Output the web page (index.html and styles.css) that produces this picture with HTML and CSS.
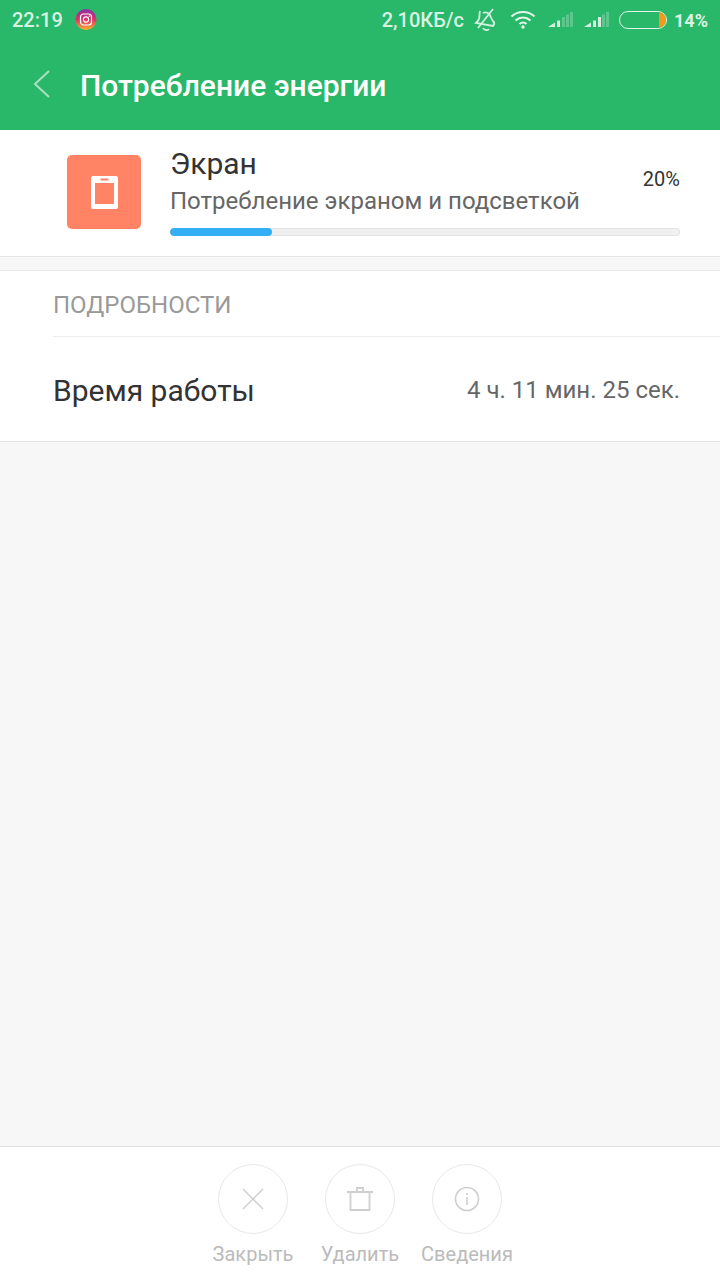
FILE: index.html
```html
<!DOCTYPE html>
<html lang="ru">
<head>
    <meta charset="UTF-8">
    <meta name="viewport" content="width=device-width, initial-scale=1.0">
    <title>Потребление энергии</title>
    <link rel="stylesheet" href="styles.css">
</head>
<body>
    <div class="page">
        <header class="top">
            <div class="status">
                <span class="time">22:19</span>
                <svg class="insta" width="22" height="22" viewBox="0 0 22 22">
                    <defs>
                        <linearGradient id="ig" x1="0" y1="0" x2="0" y2="1">
                            <stop offset="0" stop-color="#8a2fa8"/>
                            <stop offset="0.5" stop-color="#e0306a"/>
                            <stop offset="1" stop-color="#f7b52c"/>
                        </linearGradient>
                    </defs>
                    <circle cx="11" cy="10.5" r="10.5" fill="url(#ig)"/>
                    <rect x="5.5" y="5" width="11" height="11" rx="3" fill="none" stroke="#fff" stroke-width="1.2"/>
                    <circle cx="11" cy="10.5" r="2.6" fill="none" stroke="#fff" stroke-width="1.1"/>
                    <circle cx="14.3" cy="7.2" r="0.7" fill="#fff"/>
                </svg>
                <span class="status-right">
                    <span class="speed">2,10КБ/с</span>
                    <svg class="bell" width="24" height="24" viewBox="0 0 24 24" fill="none" stroke="#d4f0de" stroke-width="1.8">
                        <path d="M6 3c-1 3 0 5-1 8-1 2-2 3-3 4l17 3c1-1 2-3 0-5-2-2-2-5-4-7-2-2-4-2-6-1"/>
                        <path d="M9 20c1 2.500 5 2.500 6 1"/>
                        <path d="M19 1L4 20"/>
                    </svg>
                    <svg class="wifi" width="26" height="20" viewBox="0 0 26 20" fill="none" stroke="#e4f6ea" stroke-width="2.200">
                        <path d="M1.500 6.500c6.500-6 16.500-6 23 0"/>
                        <path d="M5.500 10.500c4.500-4 10.500-4 15 0"/>
                        <path d="M9.500 14c2-1.800 5-1.800 7 0"/>
                        <circle cx="13" cy="17" r="1.700" fill="#e4f6ea" stroke="none"/>
                    </svg>
                    <svg class="signal" width="25" height="18" viewBox="0 0 25 18">
                        <path d="M0 16l7-4.500V16z" fill="#d4f0de"/>
                        <rect x="9" y="9.500" width="3" height="6.500" fill="#d4f0de"/>
                        <rect x="14" y="6" width="3" height="10" fill="#d4f0de" opacity="0.3"/>
                        <rect x="18" y="3.500" width="3" height="12.500" fill="#d4f0de" opacity="0.3"/>
                        <rect x="22" y="1" width="3" height="15" fill="#d4f0de" opacity="0.3"/>
                    </svg>
                    <svg class="signal" width="25" height="18" viewBox="0 0 25 18">
                        <path d="M0 16l7-4.500V16z" fill="#d4f0de"/>
                        <rect x="9" y="9.500" width="3" height="6.500" fill="#d4f0de"/>
                        <rect x="14" y="6" width="3" height="10" fill="#d4f0de"/>
                        <rect x="18" y="3.500" width="3" height="12.500" fill="#d4f0de" opacity="0.3"/>
                        <rect x="22" y="1" width="3" height="15" fill="#d4f0de" opacity="0.3"/>
                    </svg>
                    <span class="battery"><span class="battery-level"></span></span>
                    <span class="percent">14%</span>
                </span>
            </div>
            <div class="titlebar">
                <svg class="back" width="18" height="28" viewBox="0 0 18 28" fill="none" stroke="#a9e0be" stroke-width="2">
                    <path d="M16 1L2 14l14 13"/>
                </svg>
                <h1>Потребление энергии</h1>
            </div>
        </header>

        <section class="usage">
            <div class="usage-icon">
                <svg width="27" height="33" viewBox="0 0 27 33">
                    <path fill-rule="evenodd" fill="#fff" d="M2 0h23a2 2 0 0 1 2 2v29a2 2 0 0 1-2 2H2a2 2 0 0 1-2-2V2a2 2 0 0 1 2-2zM4 7v21h19V7zM9.500 2.500v2h8v-2z"/>
                </svg>
            </div>
            <div class="usage-body">
                <div class="usage-name">Экран</div>
                <div class="usage-row">
                    <span class="usage-desc">Потребление экраном и подсветкой</span>
                    <span class="usage-percent">20%</span>
                </div>
                <div class="bar"><div class="bar-fill" style="width: 20%"></div></div>
            </div>
        </section>

        <section class="details">
            <div class="details-head"><span>ПОДРОБНОСТИ</span></div>
            <div class="details-row">
                <span class="details-label">Время работы</span>
                <span class="details-value">4 ч. 11 мин. 25 сек.</span>
            </div>
        </section>

        <div class="spacer"></div>

        <footer class="actions">
            <div class="action">
                <span class="circle">
                    <svg width="24" height="24" viewBox="0 0 24 24" fill="none" stroke="#cdcdcd" stroke-width="1.400">
                        <path d="M2 2l20 20M22 2L2 22"/>
                    </svg>
                </span>
                <span class="action-label">Закрыть</span>
            </div>
            <div class="action">
                <span class="circle">
                    <svg width="26" height="26" viewBox="0 0 26 26" fill="none" stroke="#cfcfcf" stroke-width="1.800">
                        <path d="M0 6h26M3.500 6v18h19V6M10 6V2h6v4"/>
                    </svg>
                </span>
                <span class="action-label">Удалить</span>
            </div>
            <div class="action">
                <span class="circle">
                    <svg width="26" height="26" viewBox="0 0 26 26" fill="none" stroke="#cfcfcf" stroke-width="1.600">
                        <circle cx="13" cy="13" r="11.500"/>
                        <path d="M13 11v8M13 7v2"/>
                    </svg>
                </span>
                <span class="action-label">Сведения</span>
            </div>
        </footer>
    </div>
</body>
</html>
```

FILE: styles.css
```css
* {
    box-sizing: border-box;
}
body {
    margin: 0;
    font-family: Roboto, "Noto Sans", sans-serif;
    background-color: #f7f7f7;
}
.page {
    width: 720px;
    height: 1280px;
    display: flex;
    flex-direction: column;
    overflow: hidden;
}
.top {
    height: 130px;
    background-color: #29b76a;
}
.status {
    height: 40px;
    display: flex;
    align-items: center;
    padding: 0 12px;
    color: #d9f3e2;
    font-size: 20px;
    font-weight: 500;
}
.insta {
    margin-left: 12px;
}
.status-right {
    margin-left: auto;
    display: flex;
    align-items: center;
}
.bell {
    margin-left: 10px;
}
.wifi {
    margin-left: 12px;
}
.signal {
    margin-left: 12px;
}
.signal + .signal {
    margin-left: 11px;
}
.battery {
    width: 48px;
    height: 18px;
    margin-left: 10px;
    border: 1.5px solid #e4f6ea;
    border-radius: 9px;
    display: flex;
    justify-content: flex-end;
    overflow: hidden;
}
.battery-level {
    width: 7px;
    background-color: #f39a1e;
}
.percent {
    margin-left: 7px;
    font-size: 18px;
    font-weight: 700;
}
.titlebar {
    height: 90px;
    padding: 0 0 0 33px;
    display: flex;
    align-items: center;
}
.back {
    margin-top: -2px;
}
.titlebar h1 {
    margin: 0 0 0 29px;
    font-size: 30px;
    font-weight: 500;
    color: #fff;
}
.usage {
    height: 127px;
    background-color: #fff;
    border-bottom: 1px solid #e4e4e4;
    display: flex;
    padding: 25px 40px 0 67px;
}
.usage-icon {
    width: 74px;
    height: 74px;
    background-color: #ff8364;
    border-radius: 5px;
    display: flex;
    align-items: center;
    justify-content: center;
}
.usage-body {
    flex: 1;
    margin-left: 29px;
    margin-top: -10px;
}
.usage-name {
    font-size: 30px;
    line-height: 38px;
    color: #333;
}
.usage-row {
    display: flex;
    justify-content: space-between;
    font-size: 24px;
    line-height: 36px;
    color: #666;
}
.usage-percent {
    font-size: 20px;
    color: #333;
    margin-top: -22px;
}
.bar {
    height: 8px;
    margin-top: 9px;
    background-color: #f0f0f0;
    box-shadow: inset 0 0 0 1px #e4e4e4;
    border-radius: 4px;
    overflow: hidden;
}
.bar-fill {
    height: 100%;
    background-color: #33b0f5;
    border-radius: 4px;
}
.details {
    margin-top: 13px;
    background-color: #fff;
    border-top: 1px solid #e8e8e8;
    border-bottom: 1px solid #e4e4e4;
    height: 172px;
}
.details-head {
    margin-left: 53px;
    height: 66px;
    padding-top: 2px;
    border-bottom: 1px solid #eee;
    display: flex;
    align-items: center;
    font-size: 24px;
    color: #999;
}
.details-row {
    height: 104px;
    padding: 2px 40px 0 53px;
    display: flex;
    align-items: center;
    justify-content: space-between;
}
.details-label {
    font-size: 30px;
    color: #333;
}
.details-value {
    font-size: 24px;
    color: #666;
}
.spacer {
    flex: 1;
}
.actions {
    height: 134px;
    background-color: #fff;
    border-top: 1px solid #ddd;
    display: flex;
    justify-content: center;
    padding-top: 17px;
}
.action {
    width: 107px;
    display: flex;
    flex-direction: column;
    align-items: center;
}
.circle {
    width: 70px;
    height: 70px;
    border: 1px solid #e8e8e8;
    border-radius: 50%;
    display: flex;
    align-items: center;
    justify-content: center;
}
.action-label {
    margin-top: 8px;
    font-size: 20px;
    color: #bbb;
    white-space: nowrap;
}
```
